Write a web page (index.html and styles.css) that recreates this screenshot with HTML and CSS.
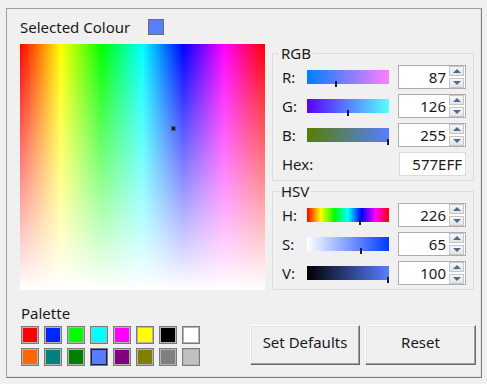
FILE: index.html
```html
<!DOCTYPE html>
<html>
<head>
    <title>Colour</title>
    <link rel="stylesheet" href="styles.css">
</head>
<body>

<div class="frame">
    <div class="selected-row">
        <span>Selected Colour</span>
        <span class="selected-swatch"></span>
    </div>

    <div class="main-row">
        <div class="spectrum">
            <div class="spectrum-marker" style="left: 151px; top: 82px;"></div>
        </div>

        <div class="side">
            <fieldset class="group">
                <legend>RGB</legend>
                <div class="field-row">
                    <span class="field-label">R:</span>
                    <div class="slider slider-r"><span class="tick" style="left: 28px;"></span></div>
                    <div class="spin">
                        <span class="spin-value">87</span>
                        <span class="spin-arrows"><span class="arrow up"></span><span class="arrow down"></span></span>
                    </div>
                </div>
                <div class="field-row">
                    <span class="field-label">G:</span>
                    <div class="slider slider-g"><span class="tick" style="left: 40px;"></span></div>
                    <div class="spin">
                        <span class="spin-value">126</span>
                        <span class="spin-arrows"><span class="arrow up"></span><span class="arrow down"></span></span>
                    </div>
                </div>
                <div class="field-row">
                    <span class="field-label">B:</span>
                    <div class="slider slider-b"><span class="tick" style="left: 80px;"></span></div>
                    <div class="spin">
                        <span class="spin-value">255</span>
                        <span class="spin-arrows"><span class="arrow up"></span><span class="arrow down"></span></span>
                    </div>
                </div>
                <div class="field-row">
                    <span class="field-label">Hex:</span>
                    <div class="hex-box">577EFF</div>
                </div>
            </fieldset>

            <fieldset class="group group-hsv">
                <legend>HSV</legend>
                <div class="field-row">
                    <span class="field-label">H:</span>
                    <div class="slider slider-h"><span class="tick" style="left: 52px;"></span></div>
                    <div class="spin">
                        <span class="spin-value">226</span>
                        <span class="spin-arrows"><span class="arrow up"></span><span class="arrow down"></span></span>
                    </div>
                </div>
                <div class="field-row">
                    <span class="field-label">S:</span>
                    <div class="slider slider-s"><span class="tick" style="left: 53px;"></span></div>
                    <div class="spin">
                        <span class="spin-value">65</span>
                        <span class="spin-arrows"><span class="arrow up"></span><span class="arrow down"></span></span>
                    </div>
                </div>
                <div class="field-row">
                    <span class="field-label">V:</span>
                    <div class="slider slider-v"><span class="tick" style="left: 80px;"></span></div>
                    <div class="spin">
                        <span class="spin-value">100</span>
                        <span class="spin-arrows"><span class="arrow up"></span><span class="arrow down"></span></span>
                    </div>
                </div>
            </fieldset>
        </div>
    </div>

    <div class="bottom-row">
        <div class="palette">
            <div class="palette-label">Palette</div>
            <div class="palette-grid">
                <span class="swatch" style="background-color: #ff0000;"></span>
                <span class="swatch" style="background-color: #0026ff;"></span>
                <span class="swatch" style="background-color: #00ff00;"></span>
                <span class="swatch" style="background-color: #00ffff;"></span>
                <span class="swatch" style="background-color: #ff00ff;"></span>
                <span class="swatch" style="background-color: #ffff00;"></span>
                <span class="swatch" style="background-color: #000000;"></span>
                <span class="swatch" style="background-color: #ffffff;"></span>
                <span class="swatch" style="background-color: #ff6600;"></span>
                <span class="swatch" style="background-color: #008080;"></span>
                <span class="swatch" style="background-color: #008000;"></span>
                <span class="swatch selected" style="background-color: #577eff;"></span>
                <span class="swatch" style="background-color: #800080;"></span>
                <span class="swatch" style="background-color: #808000;"></span>
                <span class="swatch" style="background-color: #808080;"></span>
                <span class="swatch" style="background-color: #c0c0c0;"></span>
            </div>
        </div>
        <div class="buttons">
            <button class="btn btn-defaults">Set Defaults</button>
            <button class="btn btn-reset">Reset</button>
        </div>
    </div>
</div>

</body>
</html>
```

FILE: styles.css
```css
body {
    margin: 0;
    padding: 8px 6px 6px 6px;
    background-color: #f0f0f0;
    font-family: 'Noto Sans', sans-serif;
    font-size: 15px;
    color: #1a1a1a;
}

.frame {
    width: 476px;
    height: 370px;
    box-sizing: border-box;
    border: 1px solid #a0a0a0;
    border-right-color: #7f7f7f;
    border-bottom-color: #7f7f7f;
    box-shadow: inset -1px -1px 0 #e3e3e3;
    padding: 8px 5px 0 13px;
}

.selected-row {
    display: flex;
    align-items: center;
    height: 20px;
    line-height: 20px;
}

.selected-swatch {
    width: 16px;
    height: 16px;
    box-sizing: border-box;
    margin-left: auto;
    margin-right: 312px;
    border: 1px solid #6d6d6d;
    background-color: #577eff;
}

.main-row {
    display: flex;
    gap: 7px;
    margin-top: 7px;
}

.spectrum {
    position: relative;
    width: 245px;
    height: 246px;
    background:
        linear-gradient(to bottom, rgba(255, 255, 255, 0), #fff),
        linear-gradient(to right, #f00, #ff0, #0f0, #0ff, #00f, #f0f, #f00);
}

.spectrum-marker {
    position: absolute;
    width: 5px;
    height: 5px;
    box-sizing: border-box;
    border: 1px solid #4a5a8a;
    background-color: #1a1a2a;
}

.side {
    width: 202px;
    margin-top: 1px;
}

.group {
    margin: 0;
    padding: 4px 7px 4px 9px;
    border: 1px solid #dcdcdc;
    min-width: 0;
}

.group legend {
    padding: 0 2px;
    margin-left: -3px;
    line-height: 16px;
}

.group-hsv {
    margin-top: 2px;
}

.field-row {
    display: flex;
    align-items: center;
    height: 24px;
}

.field-row + .field-row {
    margin-top: 5px;
}

.field-label {
    width: 25px;
}

.slider {
    position: relative;
    width: 82px;
    height: 14px;
    margin-right: 9px;
}

.slider-r { background: linear-gradient(to right, #007eff, #ff7eff); }
.slider-g { background: linear-gradient(to right, #5700ff, #57ffff); }
.slider-b { background: linear-gradient(to right, #577e00, #577eff); }
.slider-h { background: linear-gradient(to right, #f00, #ff0, #0f0, #0ff, #00f, #f0f, #f00); }
.slider-s { background: linear-gradient(to right, #fff, #003bff); }
.slider-v { background: linear-gradient(to right, #000, #577eff); }

.tick {
    position: absolute;
    bottom: -3px;
    width: 2px;
    height: 6px;
    background-color: #1c1c2c;
}

.spin {
    display: flex;
    width: 68px;
    height: 24px;
    box-sizing: border-box;
    border: 1px solid #abadb3;
    background-color: #fff;
}

.spin-value {
    flex: 1;
    text-align: right;
    padding-right: 3px;
    line-height: 22px;
}

.spin-arrows {
    display: flex;
    flex-direction: column;
    gap: 2px;
    width: 15px;
    margin-right: 1px;
}

.arrow {
    display: flex;
    align-items: center;
    justify-content: center;
    height: 10px;
    box-sizing: border-box;
    border: 1px solid #c6c6c6;
    background: linear-gradient(#f7f7f7, #e4e4e4);
}

.arrow::after {
    content: '';
    border-left: 4px solid transparent;
    border-right: 4px solid transparent;
}

.arrow.up::after {
    border-bottom: 4px solid #4f6a8f;
}

.arrow.down::after {
    border-top: 4px solid #4f6a8f;
}

.hex-box {
    width: 67px;
    height: 24px;
    box-sizing: border-box;
    margin-left: auto;
    border: 1px solid #dadada;
    background-color: #fff;
    text-align: right;
    padding-right: 3px;
    line-height: 22px;
}

.bottom-row {
    display: flex;
    justify-content: space-between;
    margin-top: 14px;
}

.palette {
    margin-left: 1px;
}

.palette-label {
    line-height: 18px;
    margin-bottom: 4px;
}

.palette-grid {
    display: grid;
    grid-template-columns: repeat(8, 18px);
    grid-auto-rows: 18px;
    column-gap: 5px;
    row-gap: 4px;
}

.swatch {
    box-sizing: border-box;
    border: 1px solid #7a7a7a;
    box-shadow: inset 0 0 0 1px #b4b4b4;
}

.swatch.selected {
    box-shadow: inset 0 0 0 1px #1b1b3b;
}

.buttons {
    display: flex;
    gap: 5px;
    margin-top: 21px;
}

.btn {
    height: 40px;
    padding: 0 0 6px 0;
    font-family: inherit;
    font-size: 15px;
    color: #1a1a1a;
    background-color: #f0f0f0;
    border: 1px solid;
    border-color: #fff #696969 #696969 #fff;
    box-shadow: inset -1px -1px 0 #a0a0a0, inset 1px 1px 0 #e3e3e3;
}

.btn-defaults {
    width: 110px;
}

.btn-reset {
    width: 111px;
}
```
